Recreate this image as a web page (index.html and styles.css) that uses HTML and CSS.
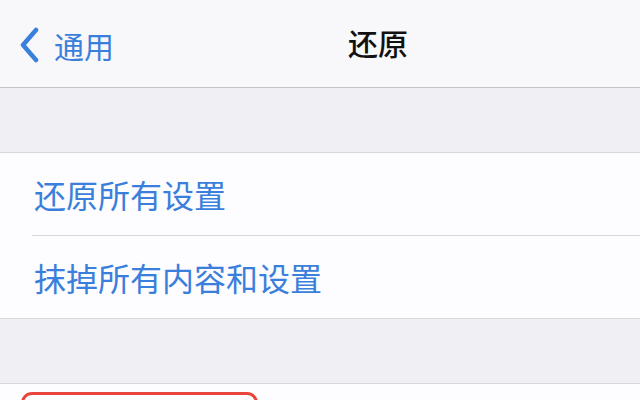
FILE: index.html
```html
<!DOCTYPE html>
<html lang="zh-CN">
<head>
  <meta charset="UTF-8" />
  <title>还原</title>
  <link rel="stylesheet" href="styles.css">
</head>
<body>
  <div class="nav">
    <a class="back">
      <svg class="chevron" width="22" height="36" viewBox="0 0 22 36">
        <path d="M18 3 L5 18 L18 33" fill="none" stroke="#3a7fdc" stroke-width="4.5" stroke-linecap="round" stroke-linejoin="round"/>
      </svg>
      <span>通用</span>
    </a>
    <div class="title">还原</div>
  </div>

  <div class="spacer"></div>

  <div class="group">
    <div class="row">还原所有设置</div>
    <div class="row">抹掉所有内容和设置</div>
  </div>

  <div class="spacer"></div>

  <div class="group last">
    <div class="row"><div class="highlight"></div></div>
  </div>
</body>
</html>
```

FILE: styles.css
```css
body {
  margin: 0;
  font-family: "Noto Sans CJK SC", "Noto Sans", sans-serif;
  background: #efeff4;
  overflow: hidden;
}

.nav {
  position: relative;
  height: 87px;
  background: #f8f8fa;
  border-bottom: 1px solid #c4c4c8;
  display: flex;
  align-items: center;
  justify-content: center;
}

.back {
  position: absolute;
  left: 18px;
  top: 23px;
  display: flex;
  align-items: center;
  gap: 14px;
  color: #3a7fdc;
  font-size: 30px;
}

.title {
  font-size: 30px;
  font-weight: 500;
  color: #111;
  margin-top: -4px;
  margin-left: 116px;
}

.spacer {
  height: 64px;
}

.group {
  background: #fdfcfe;
  border-top: 1px solid #d8d8dc;
  border-bottom: 1px solid #d8d8dc;
}

.row {
  height: 82px;
  margin-left: 32px;
  padding-left: 2px;
  display: flex;
  align-items: center;
  font-size: 32px;
  color: #3a7fdc;
  border-bottom: 1px solid #d8d8dc;
}

.group .row:last-child {
  border-bottom: none;
}

.last .row {
  margin-left: 0;
  padding-left: 0;
  align-items: flex-start;
}

.highlight {
  margin-top: 8px;
  margin-left: 21px;
  width: 231px;
  height: 60px;
  border: 3px solid #e8443c;
  border-radius: 11px;
}
```
